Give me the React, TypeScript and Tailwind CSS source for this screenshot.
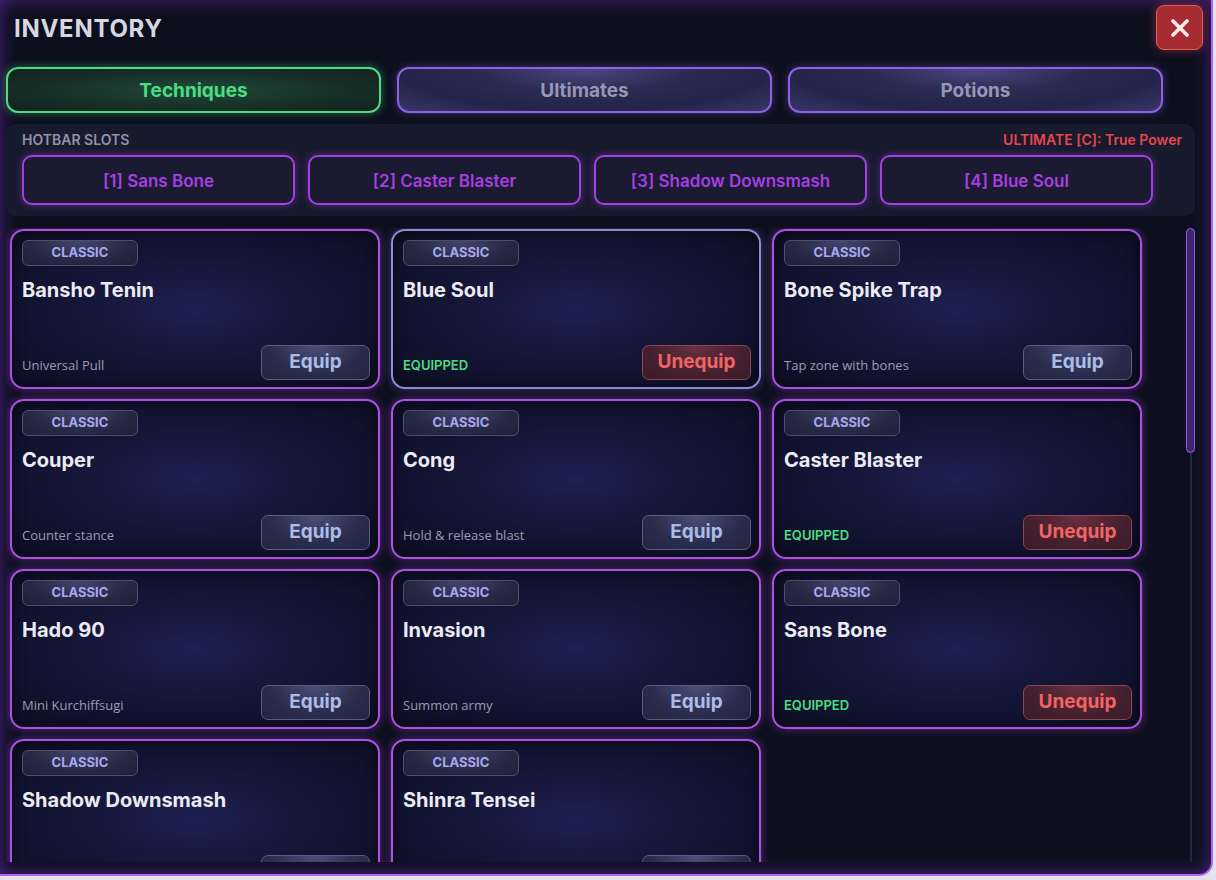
import { X } from 'lucide-react';

type Technique = {
  name: string;
  desc?: string;
  equipped?: boolean;
  selected?: boolean;
};

const techniques: Technique[] = [
  { name: 'Bansho Tenin', desc: 'Universal Pull' },
  { name: 'Blue Soul', equipped: true, selected: true },
  { name: 'Bone Spike Trap', desc: 'Tap zone with bones' },
  { name: 'Couper', desc: 'Counter stance' },
  { name: 'Cong', desc: 'Hold & release blast' },
  { name: 'Caster Blaster', equipped: true },
  { name: 'Hado 90', desc: 'Mini Kurchiffsugi' },
  { name: 'Invasion', desc: 'Summon army' },
  { name: 'Sans Bone', equipped: true },
  { name: 'Shadow Downsmash', desc: '' },
  { name: 'Shinra Tensei', desc: '' }
];

const hotbar = [
  '[1] Sans Bone',
  '[2] Caster Blaster',
  '[3] Shadow Downsmash',
  '[4] Blue Soul'
];

const heading = "font-['Inter',_'Liberation_Sans',_sans-serif]";
const body = "font-['Open_Sans',_'Liberation_Sans',_sans-serif]";

function TechniqueCard({ item }: { item: Technique }) {
  return (
    <div
      className={`h-[160px] shrink-0 rounded-[14px] border-2 pt-[9px] pb-[7px] pl-[10px] pr-[8px] flex flex-col bg-[radial-gradient(ellipse_at_50%_50%,#1e2152_0%,#151638_45%,#0d0e22_100%)] ${
        item.selected
          ? 'border-[#8e8ad6] shadow-[0_0_10px_rgba(140,130,220,0.35),inset_0_0_14px_rgba(0,0,0,0.5)]'
          : 'border-[#b04ee8] shadow-[0_0_10px_rgba(176,78,232,0.45),inset_0_0_14px_rgba(0,0,0,0.5)]'
      }`}
    >
      <div
        className={`w-[116px] h-[26px] rounded-[6px] border border-[#4d4f70] bg-[radial-gradient(ellipse_at_50%_0%,#46466e_0%,#272843_60%,#1f2038_100%)] flex items-center justify-center text-[13px] font-bold text-[#a5a9f0] ${heading}`}
      >
        CLASSIC
      </div>
      <div className={`mt-[12px] text-[20px] leading-[24px] font-bold text-[#ebebf2] ${heading}`}>
        {item.name}
      </div>
      <div className="mt-auto flex items-end justify-between">
        {item.equipped ? (
          <span className={`pb-[5px] text-[13px] font-semibold text-[#4ade80] ${heading}`}>
            EQUIPPED
          </span>
        ) : (
          <span className={`pb-[5px] text-[13px] text-[#9c9cae] ${body}`}>{item.desc}</span>
        )}
        {item.equipped ? (
          <button
            className={`w-[109px] h-[35px] rounded-[7px] border border-[#8c4656] bg-[radial-gradient(ellipse_at_50%_0%,#6a3040_0%,#45202e_60%,#3a1b28_100%)] text-[19px] font-bold text-[#f26464] ${heading}`}
          >
            Unequip
          </button>
        ) : (
          <button
            className={`w-[109px] h-[35px] rounded-[7px] border border-[#5a5c80] bg-[radial-gradient(ellipse_at_50%_0%,#4c4e78_0%,#2a2c4c_60%,#222440_100%)] text-[19px] font-bold text-[#a9bde8] ${heading}`}
          >
            Equip
          </button>
        )}
      </div>
    </div>
  );
}

export default function App() {
  return (
    <div className="w-[1216px] h-[880px] bg-[#e4e2ea] overflow-hidden">
      <div className="w-[1213px] h-[876px] flex flex-col pl-[6px] pr-[8px] bg-[#0d0f1e] border-r-2 border-b-2 border-[#b465f0] rounded-br-[14px] shadow-[inset_0_0_18px_rgba(130,50,210,0.55)]">
        <div className="pt-[5px] flex items-center justify-between">
          <h1 className={`pl-2 mt-[3px] text-[24px] font-bold tracking-[0.03em] text-[#d7d7e0] ${heading}`}>
            INVENTORY
          </h1>
          <button className="w-[47px] h-[45px] rounded-[8px] bg-[#a52c31] border border-[#e05a5e] shadow-[0_0_10px_rgba(230,70,70,0.5)] flex items-center justify-center text-[#fbe6e8]">
            <X size={28} strokeWidth={3.2} />
          </button>
        </div>

        <div className="mt-[17px] flex gap-[16px]">
          <button
            className={`w-[375px] h-[46px] pt-[2px] rounded-[12px] border-2 border-[#4fdc80] bg-[radial-gradient(ellipse_at_50%_50%,#1f4a3a_0%,#173028_55%,#13221f_100%)] shadow-[0_0_10px_rgba(74,222,128,0.45)] text-[19px] font-bold text-[#4ade80] ${heading}`}
          >
            Techniques
          </button>
          {['Ultimates', 'Potions'].map((tab) => (
            <button
              key={tab}
              className={`w-[375px] h-[46px] pt-[2px] rounded-[12px] border-2 border-[#9061e6] bg-[radial-gradient(ellipse_at_50%_0%,#4a4880_0%,#2a2a52_40%,#24244a_70%,#3a3868_100%)] shadow-[0_0_8px_rgba(144,97,230,0.4)] text-[19px] font-bold text-[#9896b6] ${heading}`}
            >
              {tab}
            </button>
          ))}
        </div>

        <div className="mt-[11px] mr-[8px] rounded-[10px] bg-[#181a2e] pt-[7px] pb-[11px] pl-4 pr-[13px]">
          <div className={`flex justify-between text-[14px] leading-[18px] font-semibold ${heading}`}>
            <span className="text-[#9192aa]">HOTBAR SLOTS</span>
            <span className="text-[#e4474d]">ULTIMATE [C]: True Power</span>
          </div>
          <div className="mt-[6px] flex gap-[13px]">
            {hotbar.map((slot) => (
              <div
                key={slot}
                className={`w-[273px] h-[50px] pt-[4px] rounded-[10px] border-2 border-[#a63fe2] bg-[#1a1a30] shadow-[0_0_8px_rgba(166,63,226,0.4)] flex items-center justify-center text-[17px] font-semibold text-[#a63fe3] ${heading}`}
              >
                {slot}
              </div>
            ))}
          </div>
        </div>

        <div className="mt-[12px] mb-[12px] mr-[8px] flex-1 min-h-0 flex">
          <div className="flex-1 overflow-hidden pl-[4px] pt-px">
            <div className="grid grid-cols-[repeat(3,370px)] gap-x-[11px] gap-y-[10px]">
              {techniques.map((t) => (
                <TechniqueCard key={t.name} item={t} />
              ))}
            </div>
          </div>
          <div className="w-[9px] flex flex-col items-center">
            <div className="w-[9px] h-[225px] rounded-full border border-[#a057e6] bg-[#3a2672]" />
            <div className="w-[2px] flex-1 bg-[#1f2a40]" />
          </div>
        </div>
      </div>
    </div>
  );
}
